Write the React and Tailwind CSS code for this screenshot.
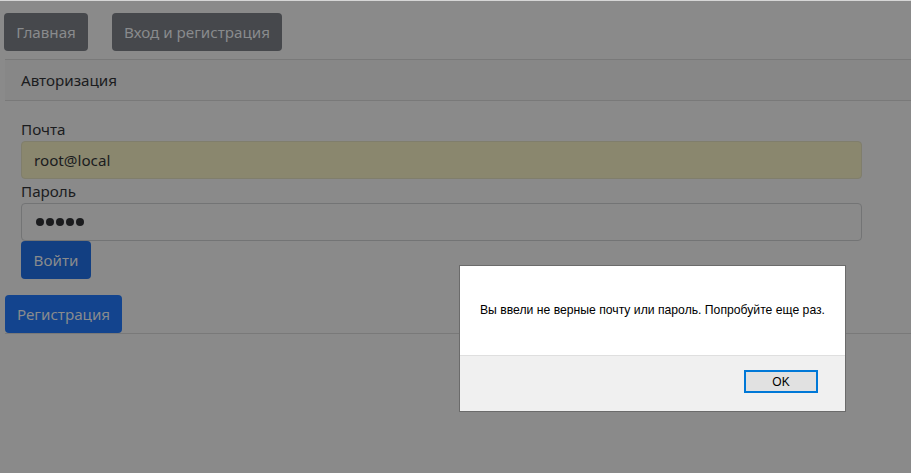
export default function App() {
  return (
    <div className="relative w-[911px] h-[473px] overflow-hidden bg-[#8a8a8a] border-t border-[#d6d6d6] font-['Noto_Sans',sans-serif] text-[15.2px] text-[#1b1c1e]">
      {/* Nav */}
      <div className="flex gap-[24px] pl-[4px] pt-[12px]">
        <button className="h-[38px] w-[84px] rounded-[4px] bg-[#46484c] text-[#898b8d]">Главная</button>
        <button className="h-[38px] w-[170px] rounded-[4px] bg-[#46484c] text-[#898b8d]">Вход и регистрация</button>
      </div>

      {/* Card */}
      <div className="ml-[5px] mt-[8px] border-t border-b border-[#797979]">
        <div className="h-[41px] flex items-center px-[16px] bg-[#878787] border-b border-[#797979]">
          Авторизация
        </div>
        <div className="px-[16px] pt-[16px] pb-[16px]">
          <div className="leading-[24px]">Почта</div>
          <div className="w-[841px] h-[38px] rounded-[4px] border border-[#807e6c] bg-[#8a876e] flex items-center px-[12px]">
            root@local
          </div>
          <div className="leading-[24px]">Пароль</div>
          <div className="w-[841px] h-[38px] rounded-[4px] border border-[#737475] flex items-center pl-[14px] gap-[1px]">
            {[0, 1, 2, 3, 4].map(i => (
              <span key={i} className="w-[8px] h-[8px] rounded-full bg-[#1b1c1e] mr-[1px]" />
            ))}
          </div>
          <button className="h-[38px] w-[70px] rounded-[4px] bg-[#123f82] text-[#898b8d]">Войти</button>
        </div>
        <button className="h-[38px] w-[117px] rounded-[4px] bg-[#13448e] text-[#898b8d] block">Регистрация</button>
      </div>

      {/* Alert dialog */}
      <div className="absolute left-[459px] top-[264px] w-[387px] h-[147px] border border-[#6b6b6b] bg-white flex flex-col font-['Liberation_Sans',Arial,sans-serif] text-[12.2px] text-black">
        <div className="h-[89px] flex items-center justify-center">
          Вы ввели не верные почту или пароль. Попробуйте еще раз.
        </div>
        <div className="flex-1 bg-[#f0f0f0] border-t border-[#dfdfdf] flex justify-end items-start pt-[14px] pr-[27px]">
          <button className="w-[74px] h-[23px] border-2 border-[#0078d7] bg-[#e1e1e1] text-[12px] leading-none">OK</button>
        </div>
      </div>
    </div>
  );
}
